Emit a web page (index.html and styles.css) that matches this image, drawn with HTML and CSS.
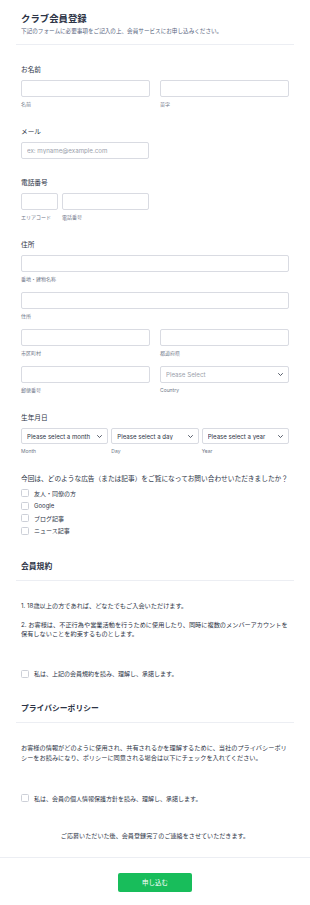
FILE: index.html
```html
<!DOCTYPE html>
<html lang="ja">
<head>
    <meta charset="UTF-8" />
    <meta name="viewport" content="width=device-width, initial-scale=1" />
    <title>クラブ会員登録</title>
    <link rel="stylesheet" href="styles.css">
</head>
<body>
    <form class="form" novalidate>
        <div class="form-inner">
            <div class="header">
                <h1 class="title">クラブ会員登録</h1>
                <p class="subtitle">下記のフォームに必要事項をご記入の上、会員サービスにお申し込みください。</p>
            </div>

            <div class="fields">
                <div class="field">
                    <label class="label">お名前</label>
                    <div class="row row-half">
                        <div class="col">
                            <input type="text" class="input" />
                            <span class="sublabel">名前</span>
                        </div>
                        <div class="col">
                            <input type="text" class="input" />
                            <span class="sublabel">苗字</span>
                        </div>
                    </div>
                </div>

                <div class="field">
                    <label class="label">メール</label>
                    <input type="email" class="input input-email" placeholder="ex: myname@example.com" />
                </div>

                <div class="field">
                    <label class="label">電話番号</label>
                    <div class="row row-phone">
                        <div class="col col-area">
                            <input type="text" class="input" />
                            <span class="sublabel">エリアコード</span>
                        </div>
                        <div class="col col-number">
                            <input type="text" class="input" />
                            <span class="sublabel">電話番号</span>
                        </div>
                    </div>
                </div>

                <div class="field">
                    <label class="label">住所</label>
                    <div class="addr-line">
                        <input type="text" class="input" />
                        <span class="sublabel">番地・建物名称</span>
                    </div>
                    <div class="addr-line">
                        <input type="text" class="input" />
                        <span class="sublabel">住所</span>
                    </div>
                    <div class="row row-half addr-line">
                        <div class="col">
                            <input type="text" class="input" />
                            <span class="sublabel">市区町村</span>
                        </div>
                        <div class="col">
                            <input type="text" class="input" />
                            <span class="sublabel">都道府県</span>
                        </div>
                    </div>
                    <div class="row row-half addr-line">
                        <div class="col">
                            <input type="text" class="input" />
                            <span class="sublabel">郵便番号</span>
                        </div>
                        <div class="col">
                            <div class="select-wrap">
                                <select class="select is-empty">
                                    <option>Please Select</option>
                                </select>
                                <svg class="chevron" viewBox="0 0 10 6" width="5" height="3"><path d="M1 1l4 4 4-4" fill="none" stroke="#2c3345" stroke-width="1.6" stroke-linecap="round" stroke-linejoin="round"/></svg>
                            </div>
                            <span class="sublabel">Country</span>
                        </div>
                    </div>
                </div>

                <div class="field">
                    <label class="label">生年月日</label>
                    <div class="row row-date">
                        <div class="col">
                            <div class="select-wrap">
                                <select class="select select-date"><option>Please select a month</option></select>
                                <svg class="chevron" viewBox="0 0 10 6" width="5" height="3"><path d="M1 1l4 4 4-4" fill="none" stroke="#2c3345" stroke-width="1.6" stroke-linecap="round" stroke-linejoin="round"/></svg>
                            </div>
                            <span class="sublabel">Month</span>
                        </div>
                        <div class="col">
                            <div class="select-wrap">
                                <select class="select select-date"><option>Please select a day</option></select>
                                <svg class="chevron" viewBox="0 0 10 6" width="5" height="3"><path d="M1 1l4 4 4-4" fill="none" stroke="#2c3345" stroke-width="1.6" stroke-linecap="round" stroke-linejoin="round"/></svg>
                            </div>
                            <span class="sublabel">Day</span>
                        </div>
                        <div class="col">
                            <div class="select-wrap">
                                <select class="select select-date"><option>Please select a year</option></select>
                                <svg class="chevron" viewBox="0 0 10 6" width="5" height="3"><path d="M1 1l4 4 4-4" fill="none" stroke="#2c3345" stroke-width="1.6" stroke-linecap="round" stroke-linejoin="round"/></svg>
                            </div>
                            <span class="sublabel">Year</span>
                        </div>
                    </div>
                </div>

                <div class="field field-question">
                    <label class="label label-question">今回は、どのような広告（または記事）をご覧になってお問い合わせいただきましたか？</label>
                    <label class="check"><span class="box"></span>友人・同僚の方</label>
                    <label class="check"><span class="box"></span>Google</label>
                    <label class="check"><span class="box"></span>ブログ記事</label>
                    <label class="check"><span class="box"></span>ニュース記事</label>
                </div>
            </div>

            <div class="section section-terms">
                <h2 class="section-title">会員規約</h2>
            </div>
            <div class="fields">
                <div class="text-block">
                    <p>1. 18歳以上の方であれば、どなたでもご入会いただけます。</p>
                    <p>2. お客様は、不正行為や営業活動を行うために使用したり、同時に複数のメンバーアカウントを保有しないことを約束するものとします。</p>
                </div>
                <label class="check check-agree"><span class="box"></span>私は、上記の会員規約を読み、理解し、承諾します。</label>
            </div>

            <div class="section section-privacy">
                <h2 class="section-title">プライバシーポリシー</h2>
            </div>
            <div class="fields">
                <div class="text-block text-privacy">
                    <p>お客様の情報がどのように使用され、共有されるかを理解するために、当社のプライバシーポリシーをお読みになり、ポリシーに同意される場合は以下にチェックを入れてください。</p>
                </div>
                <label class="check check-agree"><span class="box"></span>私は、会員の個人情報保護方針を読み、理解し、承諾します。</label>
                <p class="closing">ご応募いただいた後、会員登録完了のご連絡をさせていただきます。</p>
            </div>
        </div>

        <div class="footer">
            <button type="submit" class="submit">申し込む</button>
        </div>
    </form>
</body>
</html>
```

FILE: styles.css
```css
body {
    margin: 0;
    background: #fff;
    font-family: Inter, "Noto Sans CJK JP", sans-serif;
    color: #2c3345;
}

.form-inner {
    padding: 0 16px;
}

.header {
    padding: 13px 5px 8px;
    border-bottom: 1px solid #eceef3;
}

.title {
    margin: 0;
    font-size: 9.4px;
    line-height: 12px;
    font-weight: 700;
    color: #2c3345;
}

.subtitle {
    margin: 2px 0 0;
    font-size: 5.6px;
    line-height: 9px;
    color: #57647e;
}

.fields {
    padding: 20px 5px 0;
}

.field {
    margin-bottom: 19px;
}

.label {
    display: block;
    font-size: 6.7px;
    line-height: 10px;
    margin-bottom: 5px;
    color: #2c3345;
}

.sublabel {
    display: block;
    margin-top: 3px;
    font-size: 5px;
    line-height: 8px;
    color: #6f7889;
}

.input,
.select {
    display: block;
    width: 100%;
    height: 17px;
    box-sizing: border-box;
    border: 1px solid #d9dbe2;
    border-radius: 2px;
    background: #fff;
    padding: 0 5px;
    font-family: Inter, sans-serif;
    font-size: 6.2px;
    color: #2c3345;
    outline: none;
}

.input::placeholder {
    color: #9aa0ab;
}

.input-email {
    width: 128px;
}

.row {
    display: flex;
}

.row-half {
    gap: 10px;
}

.row-half .col {
    flex: 1;
}

.row-phone {
    gap: 4px;
}

.col-area {
    width: 37px;
}

.col-number {
    width: 87px;
}

.addr-line {
    margin-bottom: 9px;
}

.addr-line:last-child {
    margin-bottom: 0;
}

.select-wrap {
    position: relative;
}

.select {
    appearance: none;
    -webkit-appearance: none;
    padding-right: 12px;
}

.select.is-empty {
    color: #9aa0ab;
}

.chevron {
    position: absolute;
    right: 6px;
    top: 7px;
}

.row-date {
    gap: 3px;
}

.row-date .col {
    flex: 1;
}

.select-date {
    height: 16px;
    font-size: 6.1px;
}

.field-question {
    margin-bottom: 0;
}

.label-question {
    margin-bottom: 3px;
}

.check {
    display: flex;
    align-items: center;
    height: 12.5px;
    font-size: 6px;
    color: #2c3345;
    cursor: pointer;
}

.box {
    width: 8px;
    height: 8px;
    box-sizing: border-box;
    border: 1px solid #cdd0d8;
    border-radius: 1.5px;
    margin-right: 5px;
    flex-shrink: 0;
}

.section {
    padding: 0 5px 8px;
    border-bottom: 1px solid #eceef3;
}

.section-terms {
    margin-top: 24px;
}

.section-privacy {
    margin-top: 23px;
}

.section-title {
    margin: 0;
    font-size: 7.8px;
    line-height: 11px;
    font-weight: 700;
    color: #2c3345;
}

.text-block {
    font-size: 6.2px;
    line-height: 9.5px;
    color: #2c3345;
}

.text-block p {
    margin: 0 0 9px;
}

.text-block p:last-child {
    margin-bottom: 0;
}

.text-privacy {
    line-height: 10px;
}

.check-agree {
    margin-top: 29px;
}

.closing {
    margin: 26px 0 0;
    text-align: center;
    font-size: 6.1px;
    line-height: 9.5px;
    padding-bottom: 17px;
}

.footer {
    border-top: 1px solid #eceef3;
    padding: 11px 0 17px;
    text-align: center;
}

.submit {
    width: 74px;
    height: 19px;
    border: none;
    border-radius: 2px;
    background: #18bd5b;
    color: #fff;
    font-family: Inter, "Noto Sans CJK JP", sans-serif;
    font-size: 6.5px;
    cursor: pointer;
}
```
